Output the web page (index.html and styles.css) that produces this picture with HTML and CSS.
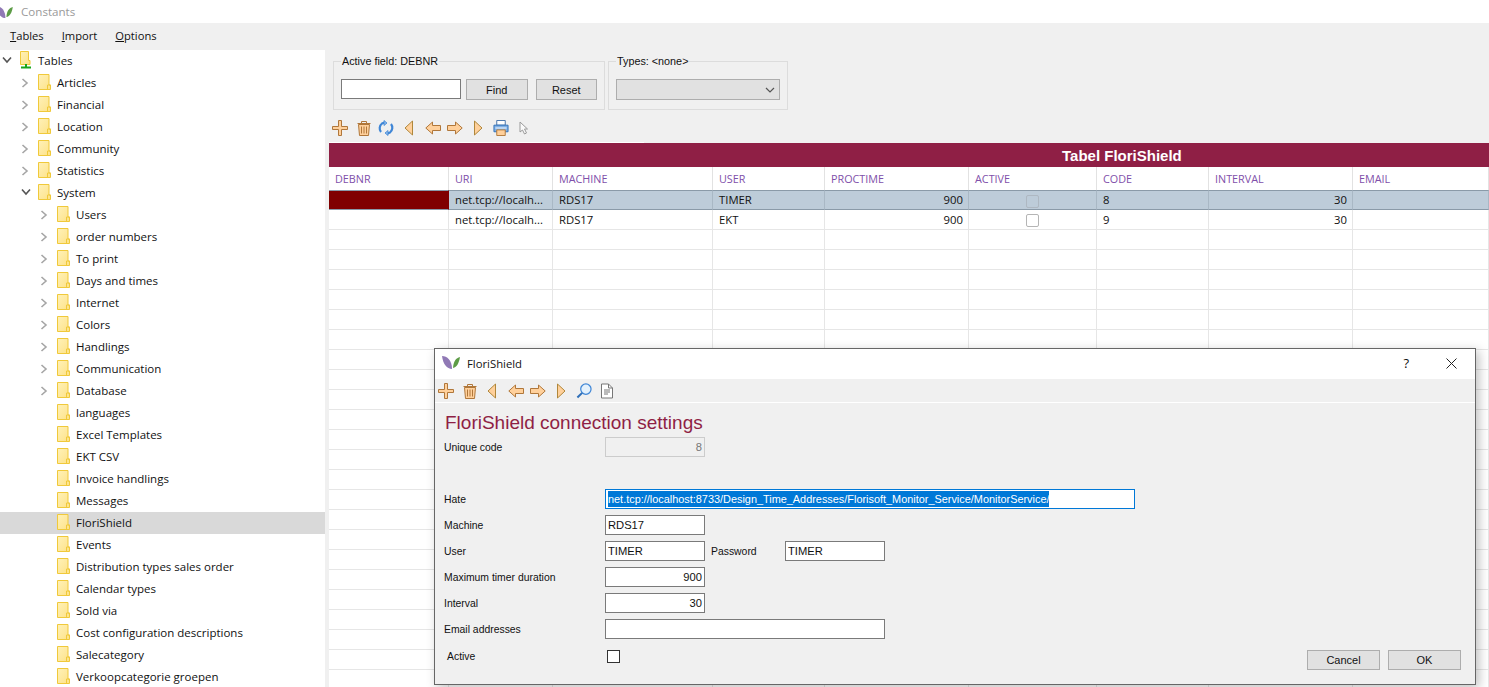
FILE: index.html
```html
<!DOCTYPE html>
<html lang="en">
<head>
<meta charset="utf-8">
<title>Constants</title>
<link rel="stylesheet" href="styles.css">
</head>
<body>
<svg class="defs" width="0" height="0" aria-hidden="true">
  <linearGradient id="foldfill" x1="0" y1="0" x2="1" y2="1"><stop offset="0" stop-color="#fff1b8"/><stop offset="1" stop-color="#fde288"/></linearGradient>
  <symbol id="leaf" viewBox="0 0 18 13">
    <path d="M0 0C5 0 10 4 10 13C5 13 1 8 0 0Z" fill="#9079b5"/>
    <path d="M18 1C14 2 11.500 5 11 12C15 11 17 7 18 1Z" fill="#5d9c46"/>
  </symbol>
  <symbol id="folder" viewBox="0 0 13 16">
    <path d="M.5.5h10.500v10.500h1.500v4.500H.5Z" fill="url(#foldfill)" stroke="#f0c93a"/>
    <path d="M9.500 15.500v-4.500h3" fill="none" stroke="#f0c93a"/>
  </symbol>
  <symbol id="root" viewBox="0 0 13 18">
    <path d="M.5.500h8v9h1.500v4H.5Z" fill="url(#foldfill)" stroke="#f0c93a"/>
    <path d="M6 13v3M1 16.500h10" stroke="#19a51c" stroke-width="2" fill="none"/>
  </symbol>
  <symbol id="closed" viewBox="0 0 8 10"><path d="M1.500 1l4.500 4-4.500 4" fill="none" stroke="#a6a6a6" stroke-width="1.600"/></symbol>
  <symbol id="open" viewBox="0 0 10 8"><path d="M1 1.500l4 4.500 4-4.500" fill="none" stroke="#555" stroke-width="1.600"/></symbol>
  <symbol id="i-plus" viewBox="0 0 16 16"><path d="M6.500 .5h3v6h6v3h-6v6h-3v-6h-6v-3h6Z" fill="#ffd09b" stroke="#b0773a"/></symbol>
  <symbol id="i-trash" viewBox="0 0 16 16"><path d="M1.500 3.500h13M5.500 3V1.500h5V3" fill="none" stroke="#b0773a"/><path d="M2.500 4.500h11l-1 11h-9Z" fill="#ffd09b" stroke="#b0773a"/><path d="M5.500 6.500v7M8 6.500v7M10.500 6.500v7" stroke="#b0773a"/></symbol>
  <symbol id="i-sync" viewBox="0 0 16 16"><path d="M3 12A6 6 0 0 1 4 3.500L6.500 2.500M13 4A6 6 0 0 1 12 12.500L9.500 13.500" fill="none" stroke="#3f86d6" stroke-width="2.200"/><path d="M6 .5v5L9 3ZM10 15.500v-5L7 13Z" fill="#8dbbeb" stroke="#3f86d6" stroke-width=".8"/></symbol>
  <symbol id="i-first" viewBox="0 0 10 16"><path d="M8.500 1v14L1 8Z" fill="#ffd09b" stroke="#b0873a"/></symbol>
  <symbol id="i-last" viewBox="0 0 10 16"><path d="M1.500 1v14L9 8Z" fill="#ffd09b" stroke="#b0873a"/></symbol>
  <symbol id="i-prev" viewBox="0 0 16 14"><path d="M7.500 1L.8 7l6.700 6V9.500h8v-5h-8Z" fill="#ffd09b" stroke="#b0773a"/></symbol>
  <symbol id="i-next" viewBox="0 0 16 14"><path d="M8.500 1l6.700 6-6.700 6V9.500h-8v-5h8Z" fill="#ffd09b" stroke="#b0773a"/></symbol>
  <symbol id="i-print" viewBox="0 0 16 17"><path d="M3.500.5h9v5h-9Z" fill="#fff" stroke="#3f6ea8"/><path d="M.5 5.500h15v7h-15Z" fill="#7fb0e6" stroke="#2f6fb8"/><path d="M2 8.500h12" stroke="#fff"/><path d="M3.500 10.500h9v6h-9Z" fill="#ffd09b" stroke="#b0773a"/></symbol>
  <symbol id="i-cursor" viewBox="0 0 10 14"><path d="M1 1v10l2.500-2 2 4 2-1-2-4H8.500Z" fill="#fafafa" stroke="#9a9a9a"/></symbol>
  <symbol id="i-find" viewBox="0 0 17 17"><circle cx="10.500" cy="6.500" r="5.500" fill="#e4f1fc" stroke="#3f86d6" stroke-width="1.300"/><path d="M6.500 10.500L1.500 15.500" stroke="#2f6fb8" stroke-width="2.200"/></symbol>
  <symbol id="i-doc" viewBox="0 0 12 15"><path d="M.5.500h7l4 4v10H.5Z" fill="#fff" stroke="#777"/><path d="M7.500.5v4h4M3 6.500h6M3 8.500h6M3 10.500h4" fill="none" stroke="#777"/></symbol>
</svg>

<header class="titlebar">
  <svg class="title-logo"><use href="#leaf"/></svg>
  <span class="title-text">Constants</span>
</header>
<nav class="menubar">
  <span class="menu-item"><u>T</u>ables</span>
  <span class="menu-item"><u>I</u>mport</span>
  <span class="menu-item"><u>O</u>ptions</span>
</nav>

<div class="main">
  <aside class="tree">
    <div class="node l0"><svg class="chev open"><use href="#open"/></svg><svg class="root-ico"><use href="#root"/></svg>Tables</div>
    <div class="node l1"><svg class="chev"><use href="#closed"/></svg><svg class="fold"><use href="#folder"/></svg>Articles</div>
    <div class="node l1"><svg class="chev"><use href="#closed"/></svg><svg class="fold"><use href="#folder"/></svg>Financial</div>
    <div class="node l1"><svg class="chev"><use href="#closed"/></svg><svg class="fold"><use href="#folder"/></svg>Location</div>
    <div class="node l1"><svg class="chev"><use href="#closed"/></svg><svg class="fold"><use href="#folder"/></svg>Community</div>
    <div class="node l1"><svg class="chev"><use href="#closed"/></svg><svg class="fold"><use href="#folder"/></svg>Statistics</div>
    <div class="node l1"><svg class="chev open"><use href="#open"/></svg><svg class="fold"><use href="#folder"/></svg>System</div>
    <div class="node l2"><svg class="chev"><use href="#closed"/></svg><svg class="fold"><use href="#folder"/></svg>Users</div>
    <div class="node l2"><svg class="chev"><use href="#closed"/></svg><svg class="fold"><use href="#folder"/></svg>order numbers</div>
    <div class="node l2"><svg class="chev"><use href="#closed"/></svg><svg class="fold"><use href="#folder"/></svg>To print</div>
    <div class="node l2"><svg class="chev"><use href="#closed"/></svg><svg class="fold"><use href="#folder"/></svg>Days and times</div>
    <div class="node l2"><svg class="chev"><use href="#closed"/></svg><svg class="fold"><use href="#folder"/></svg>Internet</div>
    <div class="node l2"><svg class="chev"><use href="#closed"/></svg><svg class="fold"><use href="#folder"/></svg>Colors</div>
    <div class="node l2"><svg class="chev"><use href="#closed"/></svg><svg class="fold"><use href="#folder"/></svg>Handlings</div>
    <div class="node l2"><svg class="chev"><use href="#closed"/></svg><svg class="fold"><use href="#folder"/></svg>Communication</div>
    <div class="node l2"><svg class="chev"><use href="#closed"/></svg><svg class="fold"><use href="#folder"/></svg>Database</div>
    <div class="node l2"><span class="chev blank"></span><svg class="fold"><use href="#folder"/></svg>languages</div>
    <div class="node l2"><span class="chev blank"></span><svg class="fold"><use href="#folder"/></svg>Excel Templates</div>
    <div class="node l2"><span class="chev blank"></span><svg class="fold"><use href="#folder"/></svg>EKT CSV</div>
    <div class="node l2"><span class="chev blank"></span><svg class="fold"><use href="#folder"/></svg>Invoice handlings</div>
    <div class="node l2"><span class="chev blank"></span><svg class="fold"><use href="#folder"/></svg>Messages</div>
    <div class="node l2 selected"><span class="chev blank"></span><svg class="fold"><use href="#folder"/></svg>FloriShield</div>
    <div class="node l2"><span class="chev blank"></span><svg class="fold"><use href="#folder"/></svg>Events</div>
    <div class="node l2"><span class="chev blank"></span><svg class="fold"><use href="#folder"/></svg>Distribution types sales order</div>
    <div class="node l2"><span class="chev blank"></span><svg class="fold"><use href="#folder"/></svg>Calendar types</div>
    <div class="node l2"><span class="chev blank"></span><svg class="fold"><use href="#folder"/></svg>Sold via</div>
    <div class="node l2"><span class="chev blank"></span><svg class="fold"><use href="#folder"/></svg>Cost configuration descriptions</div>
    <div class="node l2"><span class="chev blank"></span><svg class="fold"><use href="#folder"/></svg>Salecategory</div>
    <div class="node l2"><span class="chev blank"></span><svg class="fold"><use href="#folder"/></svg>Verkoopcategorie groepen</div>
  </aside>

  <section class="content">
    <div class="filters">
      <fieldset class="group group-find">
        <legend>Active field: DEBNR</legend>
        <div class="field find-input"></div>
        <div class="btn btn-find">Find</div>
        <div class="btn btn-reset">Reset</div>
      </fieldset>
      <fieldset class="group group-types">
        <legend>Types: &lt;none&gt;</legend>
        <div class="combo"><svg class="combo-arrow" viewBox="0 0 10 6"><path d="M1 1l4 4 4-4" fill="none" stroke="#555" stroke-width="1.200"/></svg></div>
      </fieldset>
    </div>

    <div class="toolbar">
      <svg class="ico w16 t-plus"><use href="#i-plus"/></svg>
      <svg class="ico w16 t-trash"><use href="#i-trash"/></svg>
      <svg class="ico w16 t-sync"><use href="#i-sync"/></svg>
      <svg class="ico w10 t-first"><use href="#i-first"/></svg>
      <svg class="ico w16 t-prev"><use href="#i-prev"/></svg>
      <svg class="ico w16 t-next"><use href="#i-next"/></svg>
      <svg class="ico w10 t-last"><use href="#i-last"/></svg>
      <svg class="ico w16 t-print"><use href="#i-print"/></svg>
      <svg class="ico w10 t-cursor"><use href="#i-cursor"/></svg>
    </div>
    <div class="strip"></div>

    <div class="banner"><span class="banner-text">Tabel FloriShield</span></div>

    <table class="grid">
      <colgroup>
        <col class="c1"><col class="c2"><col class="c3"><col class="c4"><col class="c5"><col class="c6"><col class="c7"><col class="c8"><col class="c9">
      </colgroup>
      <thead>
        <tr><th>DEBNR</th><th>URI</th><th>MACHINE</th><th>USER</th><th>PROCTIME</th><th>ACTIVE</th><th>CODE</th><th>INTERVAL</th><th>EMAIL</th></tr>
      </thead>
      <tbody>
        <tr class="current"><td class="marker"></td><td>net.tcp://localh...</td><td>RDS17</td><td>TIMER</td><td class="num">900</td><td class="chk"><span class="cb dim"></span></td><td>8</td><td class="num">30</td><td></td></tr>
        <tr><td></td><td>net.tcp://localh...</td><td>RDS17</td><td>EKT</td><td class="num">900</td><td class="chk"><span class="cb"></span></td><td>9</td><td class="num">30</td><td></td></tr>
        <tr><td></td><td></td><td></td><td></td><td></td><td></td><td></td><td></td><td></td></tr>
        <tr><td></td><td></td><td></td><td></td><td></td><td></td><td></td><td></td><td></td></tr>
        <tr><td></td><td></td><td></td><td></td><td></td><td></td><td></td><td></td><td></td></tr>
        <tr><td></td><td></td><td></td><td></td><td></td><td></td><td></td><td></td><td></td></tr>
        <tr><td></td><td></td><td></td><td></td><td></td><td></td><td></td><td></td><td></td></tr>
        <tr><td></td><td></td><td></td><td></td><td></td><td></td><td></td><td></td><td></td></tr>
        <tr><td></td><td></td><td></td><td></td><td></td><td></td><td></td><td></td><td></td></tr>
        <tr><td></td><td></td><td></td><td></td><td></td><td></td><td></td><td></td><td></td></tr>
        <tr><td></td><td></td><td></td><td></td><td></td><td></td><td></td><td></td><td></td></tr>
        <tr><td></td><td></td><td></td><td></td><td></td><td></td><td></td><td></td><td></td></tr>
        <tr><td></td><td></td><td></td><td></td><td></td><td></td><td></td><td></td><td></td></tr>
        <tr><td></td><td></td><td></td><td></td><td></td><td></td><td></td><td></td><td></td></tr>
        <tr><td></td><td></td><td></td><td></td><td></td><td></td><td></td><td></td><td></td></tr>
        <tr><td></td><td></td><td></td><td></td><td></td><td></td><td></td><td></td><td></td></tr>
        <tr><td></td><td></td><td></td><td></td><td></td><td></td><td></td><td></td><td></td></tr>
        <tr><td></td><td></td><td></td><td></td><td></td><td></td><td></td><td></td><td></td></tr>
        <tr><td></td><td></td><td></td><td></td><td></td><td></td><td></td><td></td><td></td></tr>
        <tr><td></td><td></td><td></td><td></td><td></td><td></td><td></td><td></td><td></td></tr>
        <tr><td></td><td></td><td></td><td></td><td></td><td></td><td></td><td></td><td></td></tr>
        <tr><td></td><td></td><td></td><td></td><td></td><td></td><td></td><td></td><td></td></tr>
        <tr><td></td><td></td><td></td><td></td><td></td><td></td><td></td><td></td><td></td></tr>
        <tr><td></td><td></td><td></td><td></td><td></td><td></td><td></td><td></td><td></td></tr>
        <tr><td></td><td></td><td></td><td></td><td></td><td></td><td></td><td></td><td></td></tr>
      </tbody>
    </table>
  </section>
</div>

<div class="dialog" role="dialog">
  <div class="dlg-title">
    <svg class="dlg-logo"><use href="#leaf"/></svg>
    <span class="dlg-name">FloriShield</span>
    <span class="dlg-help">?</span>
    <svg class="dlg-close" viewBox="0 0 11 11"><path d="M.5.5l10 10M10.500.5l-10 10" stroke="#222" fill="none"/></svg>
  </div>
  <div class="dlg-tools">
    <svg class="ico w16 d-plus"><use href="#i-plus"/></svg>
    <svg class="ico w16 d-trash"><use href="#i-trash"/></svg>
    <svg class="ico w10 d-first"><use href="#i-first"/></svg>
    <svg class="ico w16 d-prev"><use href="#i-prev"/></svg>
    <svg class="ico w16 d-next"><use href="#i-next"/></svg>
    <svg class="ico w10 d-last"><use href="#i-last"/></svg>
    <svg class="ico w16 d-find"><use href="#i-find"/></svg>
    <svg class="ico w12 d-doc"><use href="#i-doc"/></svg>
  </div>
  <div class="dlg-body">
    <h1 class="dlg-heading">FloriShield connection settings</h1>
    <div class="row"><label class="lbl">Unique code</label><div class="field w-s num readonly">8</div></div>
    <div class="row row-gap"><label class="lbl">Hate</label><div class="field w-l focus"><span class="sel">net.tcp://localhost:8733/Design_Time_Addresses/Florisoft_Monitor_Service/MonitorService/</span></div></div>
    <div class="row"><label class="lbl">Machine</label><div class="field w-s">RDS17</div></div>
    <div class="row"><label class="lbl">User</label><div class="field w-s">TIMER</div><label class="lbl-inline">Password</label><div class="field w-s">TIMER</div></div>
    <div class="row"><label class="lbl">Maximum timer duration</label><div class="field w-s num">900</div></div>
    <div class="row"><label class="lbl">Interval</label><div class="field w-s num">30</div></div>
    <div class="row"><label class="lbl">Email addresses</label><div class="field w-m"></div></div>
    <div class="row row-last">
      <label class="lbl lbl-active">Active</label>
      <span class="check"></span>
      <div class="btn dlg-cancel">Cancel</div>
      <div class="btn dlg-ok">OK</div>
    </div>
  </div>
</div>
</body>
</html>
```

FILE: styles.css
```css
* { box-sizing: border-box; }
html, body { margin: 0; height: 100%; }
body {
  width: 1489px;
  height: 687px;
  overflow: hidden;
  position: relative;
  background: #f0f0f0;
  font-family: "Open Sans", "Noto Sans", sans-serif;
  font-size: 11.5px;
  color: #111;
  display: flex;
  flex-direction: column;
}
.defs { position: absolute; }

.titlebar {
  height: 23px;
  background: #fff;
  display: flex;
  align-items: center;
  flex: none;
}
.title-logo { width: 17px; height: 12px; margin-left: -4px; margin-right: 8px; }
.title-text { color: #9a9a9a; font-size: 11.600px; }

.menubar {
  height: 27px;
  flex: none;
  display: flex;
  align-items: center;
  padding: 0 0 3px 10px;
  gap: 18px;
  font-size: 11.200px;
}

.main { flex: 1; display: flex; min-height: 0; }

.tree { width: 325px; flex: none; background: #fff; overflow: hidden; }
.node { height: 22px; display: flex; align-items: center; padding-bottom: 2px; font-size: 11.500px; white-space: nowrap; }
.l0 { padding-left: 0; }
.l1 { padding-left: 19px; }
.l2 { padding-left: 38px; }
.selected { background: #d9d9d9; }
.chev { width: 8px; height: 10px; flex: none; display: block; margin: 2px 9px 0 2px; }
.chev.open { width: 10px; height: 8px; margin: 0 7px 0 2px; }
.fold { width: 13px; height: 16px; flex: none; margin-right: 6px; }
.root-ico { width: 13px; height: 18px; flex: none; margin-right: 5px; margin-left: 1px; }

.content { margin-left: 4px; flex: 1; min-width: 0; display: flex; flex-direction: column; }

.filters { display: flex; height: 68px; padding: 5px 0 0 4px; gap: 3px; flex: none; }
.group {
  margin: 0;
  height: 55px;
  padding: 12px 7px 0;
  border: 1px solid #dcdcdc;
  display: flex;
  align-items: flex-start;
  min-width: 0;
}
.group legend { padding: 0 1px; font: 10.800px/12px "Liberation Sans", sans-serif; margin-left: 0; }
.group-find { width: 272px; }
.group-types { width: 180px; }
.find-input { width: 120px; margin-right: 5px; }
.btn {
  height: 21px;
  background: #e1e1e1;
  border: 1px solid #adadad;
  display: flex;
  align-items: center;
  justify-content: center;
  font: 11px "Liberation Sans", sans-serif;
}
.btn-find { width: 62px; margin-right: 8px; }
.btn-reset { width: 62px; }
.combo {
  width: 168px;
  height: 21px;
  background: #e1e1e1;
  border: 1px solid #adadad;
  display: flex;
  align-items: center;
  justify-content: flex-end;
  padding-right: 4px;
}
.combo-arrow { width: 10px; height: 6px; }

.toolbar { height: 24px; display: flex; align-items: center; padding: 0 0 5px 3px; flex: none; }
.strip { width: 315px; height: 1px; background: #fff; flex: none; }
.ico { flex: none; height: 16px; }
.w16 { width: 16px; }
.w10 { width: 10px; }
.w12 { width: 12px; }
.t-trash { margin-left: 8px; }
.t-sync { margin-left: 6px; }
.t-first { margin-left: 10px; }
.t-prev { margin-left: 11px; }
.t-next { margin-left: 6px; }
.t-last { margin-left: 10px; }
.t-print { margin-left: 10px; }
.t-cursor { margin-left: 10px; }

.banner {
  height: 24px;
  background: #8f1f45;
  flex: none;
  display: flex;
  align-items: center;
  padding-left: 733px;
  color: #fff;
  font: bold 15px "Liberation Sans", sans-serif;
  white-space: nowrap;
}

.grid {
  table-layout: fixed;
  border-collapse: separate;
  border-spacing: 0;
  width: 1160px;
  background: #fff;
  font-size: 11.300px;
}
.c1 { width: 120px; }
.c2 { width: 104px; }
.c3 { width: 160px; }
.c4 { width: 112px; }
.c5 { width: 144px; }
.c6 { width: 128px; }
.c7 { width: 112px; }
.c8 { width: 144px; }
.c9 { width: 136px; }
.grid th {
  height: 23px;
  padding: 0 6px;
  font-weight: 400;
  text-align: left;
  color: #7f50aa;
  font-size: 10.800px;
  border-right: 1px solid #e2e2e2;
  background: #fff;
}
.grid td {
  height: 20px;
  padding: 0 6px;
  white-space: nowrap;
  overflow: hidden;
  border-right: 1px solid #e6e6e6;
  border-bottom: 1px solid #e6e6e6;
}
.grid .num { text-align: right; padding-right: 5px; }
.grid .chk { text-align: center; padding: 0; }
.current td {
  background: #bdccd9;
  border-top: 1px solid #8a9aa8;
  border-bottom: 1px solid #8a9aa8;
  border-right-color: #a9b8c5;
  padding-bottom: 2px;
}
.current .marker { background: #800000; border-color: #8a9aa8 #800000; }
.cb {
  display: inline-block;
  width: 13px;
  height: 13px;
  background: #fff;
  border: 1px solid #b5b5b5;
  border-radius: 2px;
  vertical-align: middle;
}
.cb.dim { background: #bdccd9; border-color: #aeb8c2; }

.dialog {
  position: absolute;
  left: 434px;
  top: 348px;
  width: 1042px;
  height: 337px;
  background: #f0f0f0;
  border: 1px solid #666;
  box-shadow: 3px 3px 10px rgba(0, 0, 0, .25);
  display: flex;
  flex-direction: column;
}
.dlg-title {
  height: 30px;
  background: #fff;
  display: flex;
  align-items: center;
  padding: 0 0 2px 7px;
  flex: none;
  font-size: 11.300px;
}
.dlg-logo { width: 18px; height: 13px; margin-right: 7px; margin-top: -1px; }
.dlg-help { margin-left: auto; font-size: 13px; }
.dlg-close { width: 11px; height: 11px; margin-left: 37px; margin-right: 18px; }
.dlg-tools {
  height: 24px;
  flex: none;
  display: flex;
  align-items: center;
  padding-left: 3px;
  border-bottom: 1px solid #fff;
}
.d-trash { margin-left: 8px; }
.d-first { margin-left: 9px; }
.d-prev { margin-left: 11px; }
.d-next { margin-left: 6px; }
.d-last { margin-left: 10px; }
.d-find { margin-left: 10px; }
.d-doc { margin-left: 9px; }

.dlg-body { flex: 1; padding: 10px 14px 0 9px; display: flex; flex-direction: column; gap: 6px; }
.dlg-heading {
  margin: 0 0 -2px 1px;
  font: 400 19px/20px "Liberation Sans", sans-serif;
  color: #8f1f45;
}
.row { display: flex; align-items: center; height: 20px; font: 10.400px "Liberation Sans", sans-serif; }
.row-gap { margin-top: 26px; }
.lbl { width: 161px; flex: none; }
.lbl-inline { width: 74px; margin-left: 6px; flex: none; }
.field {
  height: 20px;
  background: #fff;
  border: 1px solid #7a7a7a;
  padding: 0 2px;
  display: flex;
  align-items: center;
  font: 11.200px "Liberation Sans", sans-serif;
  flex: none;
}
.w-s { width: 100px; }
.w-m { width: 280px; }
.w-l { width: 530px; }
.field.num { justify-content: flex-end; }
.readonly { background: #f0f0f0; border-color: #ccc; color: #777; }
.focus { border-color: #0078d7; padding: 0 2px; }
.sel { background: #0078d7; color: #fff; font-size: 10.900px; white-space: nowrap; line-height: 16px; }
.row-last { margin-top: 5px; align-items: flex-start; }
.lbl-active { width: 160px; padding: 1px 0 0 3px; }
.check {
  width: 13px;
  height: 13px;
  border: 1px solid #333;
  background: #fff;
  flex: none;
  margin-left: 3px;
}
.dlg-cancel { width: 73px; height: 20px; margin-left: auto; margin-right: 8px; }
.dlg-ok { width: 73px; height: 20px; }
```
